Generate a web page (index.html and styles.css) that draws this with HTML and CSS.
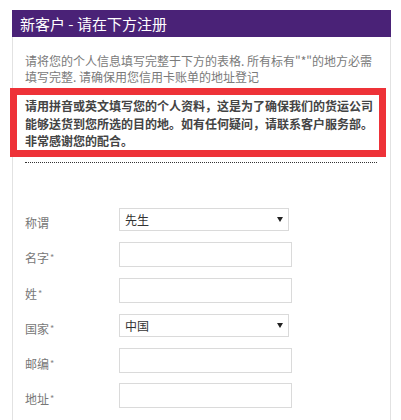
FILE: index.html
```html
<!DOCTYPE html>
<html lang="zh-CN">
<head>
<meta charset="utf-8">
<title>新客户注册</title>
<link rel="stylesheet" href="styles.css">
</head>
<body>
<div class="card">
  <div class="card-head">新客户 - 请在下方注册</div>
  <div class="card-body">
    <p class="intro">请将您的个人信息填写完整于下方的表格. 所有标有"*"的地方必需填写完整. 请确保用您信用卡账单的地址登记</p>
    <div class="notice">请用拼音或英文填写您的个人资料，这是为了确保我们的货运公司能够送货到您所选的目的地。如有任何疑问，请联系客户服务部。非常感谢您的配合。</div>
    <div class="divider"></div>
    <form class="form">
      <label class="lbl">称谓</label>
      <div class="sel">
        <select class="sel-box"><option>先生</option></select>
        <svg class="sel-arrow" width="6" height="5" viewBox="0 0 6 5"><polygon points="0,0 6,0 3,5" fill="#222"/></svg>
      </div>
      <label class="lbl">名字<span class="req">*</span></label>
      <input class="txt" type="text">
      <label class="lbl">姓<span class="req">*</span></label>
      <input class="txt" type="text">
      <label class="lbl">国家<span class="req">*</span></label>
      <div class="sel">
        <select class="sel-box"><option>中国</option></select>
        <svg class="sel-arrow" width="6" height="5" viewBox="0 0 6 5"><polygon points="0,0 6,0 3,5" fill="#222"/></svg>
      </div>
      <label class="lbl">邮编<span class="req">*</span></label>
      <input class="txt" type="text">
      <label class="lbl">地址<span class="req">*</span></label>
      <input class="txt" type="text">
    </form>
  </div>
</div>
</body>
</html>
```
FILE: styles.css
```css
html, body {
  margin: 0;
  padding: 0;
  background: #ffffff;
}
body {
  font-family: "Noto Sans CJK SC", "Microsoft YaHei", sans-serif;
  font-size: 12px;
  color: #777;
}
.card {
  margin: 10px 0 0 12px;
  width: 379px;
}
.card-head {
  height: 27px;
  line-height: 27px;
  background: #4a2277;
  color: #fff;
  font-size: 15px;
  padding-left: 8px;
  box-sizing: border-box;
}
.card-body {
  border: 1px solid #e2e2e2;
  border-top: none;
  padding-bottom: 14px;
}
.intro {
  margin: 0;
  padding: 16px 15px 0 12px;
  line-height: 15.5px;
  color: #7a7a7a;
}
.notice {
  margin: 4px 4px 0 -3px;
  border: 7px solid #ee3238;
  padding: 2px 4px 0.5px 8px;
  line-height: 17.5px;
  font-weight: bold;
  color: #444;
  background: #fff;
}
.divider {
  margin: 5px 13px 0 12px;
  border-top: 1px dotted #333;
}
.form {
  margin: 44px 0 0 0;
  padding-left: 12px;
  display: grid;
  grid-template-columns: 94px auto;
  grid-auto-rows: 25px;
  row-gap: 10.3px;
  justify-content: start;
}
.lbl {
  margin-top: 7px;
  line-height: 18px;
  color: #777;
  font-size: 12px;
}
.req {
  font-size: 9px;
  vertical-align: 2px;
  line-height: 10px;
  margin-left: 1px;
  color: #888;
}
.sel {
  position: relative;
  align-self: center;
  width: 170px;
  height: 23px;
}
.sel-box {
  appearance: none;
  -webkit-appearance: none;
  width: 170px;
  height: 23px;
  margin: 0;
  border: 1px solid #dadada;
  border-radius: 0;
  background: #fff;
  font-family: "Noto Sans CJK SC", sans-serif;
  font-size: 12px;
  color: #333;
  padding: 0 0 0 5px;
  box-sizing: border-box;
  outline: none;
}
.sel-arrow {
  position: absolute;
  right: 6px;
  top: 9px;
}
.txt {
  width: 173px;
  height: 25px;
  margin: 0;
  border: 1px solid #dadada;
  border-radius: 0;
  padding: 0 5px;
  box-sizing: border-box;
  background: #fff;
  outline: none;
}
```
